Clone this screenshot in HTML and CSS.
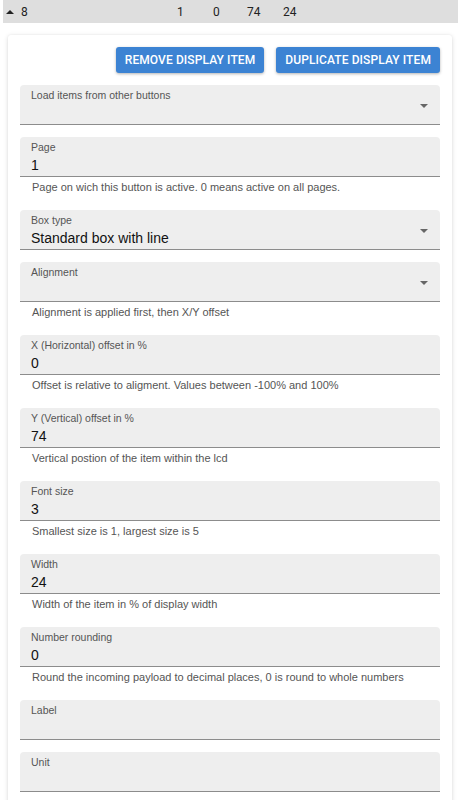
FILE: index.html
```html
<!DOCTYPE html>
<html>
<head>
<meta charset="utf-8">
<link rel="stylesheet" href="styles.css">
</head>
<body>
<div class="page">
  <div class="bar">
    <span class="caret"></span>
    <span class="c-id">8</span>
    <span class="c-a">1</span>
    <span class="c-b">0</span>
    <span class="c-c">74</span>
    <span class="c-d">24</span>
  </div>
  <div class="card">
    <div class="actions">
      <button class="btn">REMOVE DISPLAY ITEM</button>
      <button class="btn">DUPLICATE DISPLAY ITEM</button>
    </div>

    <div class="field select"><label>Load items from other buttons</label><div class="value"></div><span class="arrow"></span></div>

    <div class="field"><label>Page</label><div class="value">1</div></div>
    <div class="helper">Page on wich this button is active. 0 means active on all pages.</div>

    <div class="field select"><label>Box type</label><div class="value">Standard box with line</div><span class="arrow"></span></div>

    <div class="field select"><label>Alignment</label><div class="value"></div><span class="arrow"></span></div>
    <div class="helper">Alignment is applied first, then X/Y offset</div>

    <div class="field"><label>X (Horizontal) offset in %</label><div class="value">0</div></div>
    <div class="helper">Offset is relative to aligment. Values between -100% and 100%</div>

    <div class="field"><label>Y (Vertical) offset in %</label><div class="value">74</div></div>
    <div class="helper">Vertical postion of the item within the lcd</div>

    <div class="field"><label>Font size</label><div class="value">3</div></div>
    <div class="helper">Smallest size is 1, largest size is 5</div>

    <div class="field"><label>Width</label><div class="value">24</div></div>
    <div class="helper">Width of the item in % of display width</div>

    <div class="field"><label>Number rounding</label><div class="value">0</div></div>
    <div class="helper">Round the incoming payload to decimal places, 0 is round to whole numbers</div>

    <div class="field"><label>Label</label><div class="value"></div></div>

    <div class="field"><label>Unit</label><div class="value"></div></div>
  </div>
</div>
</body>
</html>
```

FILE: styles.css
```css
* { box-sizing: border-box; }
html, body { margin: 0; padding: 0; background: #fff; }
body { font-family: "Liberation Sans", Arial, sans-serif; color: #212121; }
.page { padding: 0 3px; }
.bar {
  position: relative;
  height: 23px;
  background: #dedede;
  font-family: Roboto, "Liberation Sans", sans-serif;
  font-size: 12px;
  color: #222;
}
.bar span { position: absolute; top: 5px; line-height: 14px; }
.caret {
  left: 3px; top: 10px !important;
  width: 0; height: 0;
  border-left: 4px solid transparent;
  border-right: 4px solid transparent;
  border-bottom: 4px solid #222;
}
.c-id { left: 18px; }
.c-a { left: 174px; }
.c-b { left: 210px; }
.c-c { left: 244px; }
.c-d { left: 280px; }
.card {
  margin: 12px 6px 0 5px;
  background: #fff;
  border-radius: 3px;
  box-shadow: 0 1px 5px rgba(0,0,0,0.14), 0 0 2px rgba(0,0,0,0.06);
  padding: 12px 12px 20px 12px;
  min-height: 800px;
}
.actions {
  display: flex;
  justify-content: flex-end;
  gap: 12px;
  margin-bottom: 12px;
}
.btn {
  height: 26px;
  padding: 0 9px;
  border: none;
  border-radius: 3px;
  background: #3c83d3;
  color: #fff;
  font-family: Roboto, "Liberation Sans", Arial, sans-serif;
  font-weight: 500;
  font-size: 12px;
  letter-spacing: 0.1px;
  box-shadow: 0 1px 3px rgba(0,0,0,0.3);
}
.field {
  position: relative;
  height: 40px;
  background: #eeeeee;
  border-radius: 4px 4px 0 0;
  border-bottom: 1.5px solid #8c8c8c;
  padding: 4px 11px 0 11px;
  margin-bottom: 12px;
}
.field label {
  display: block;
  font-size: 10.5px;
  line-height: 13px;
  color: #555;
}
.field .value {
  font-size: 14px;
  line-height: 18px;
  color: #111;
  margin-top: 2px;
}
.arrow {
  position: absolute;
  right: 12px;
  top: 19px;
  width: 0; height: 0;
  border-left: 4px solid transparent;
  border-right: 4px solid transparent;
  border-top: 4px solid #666;
}
.helper {
  margin: -12px 0 12px 0;
  padding: 3px 12px 0 12px;
  height: 21px;
  font-size: 11px;
  line-height: 14px;
  color: #555;
  letter-spacing: 0;
}
```
